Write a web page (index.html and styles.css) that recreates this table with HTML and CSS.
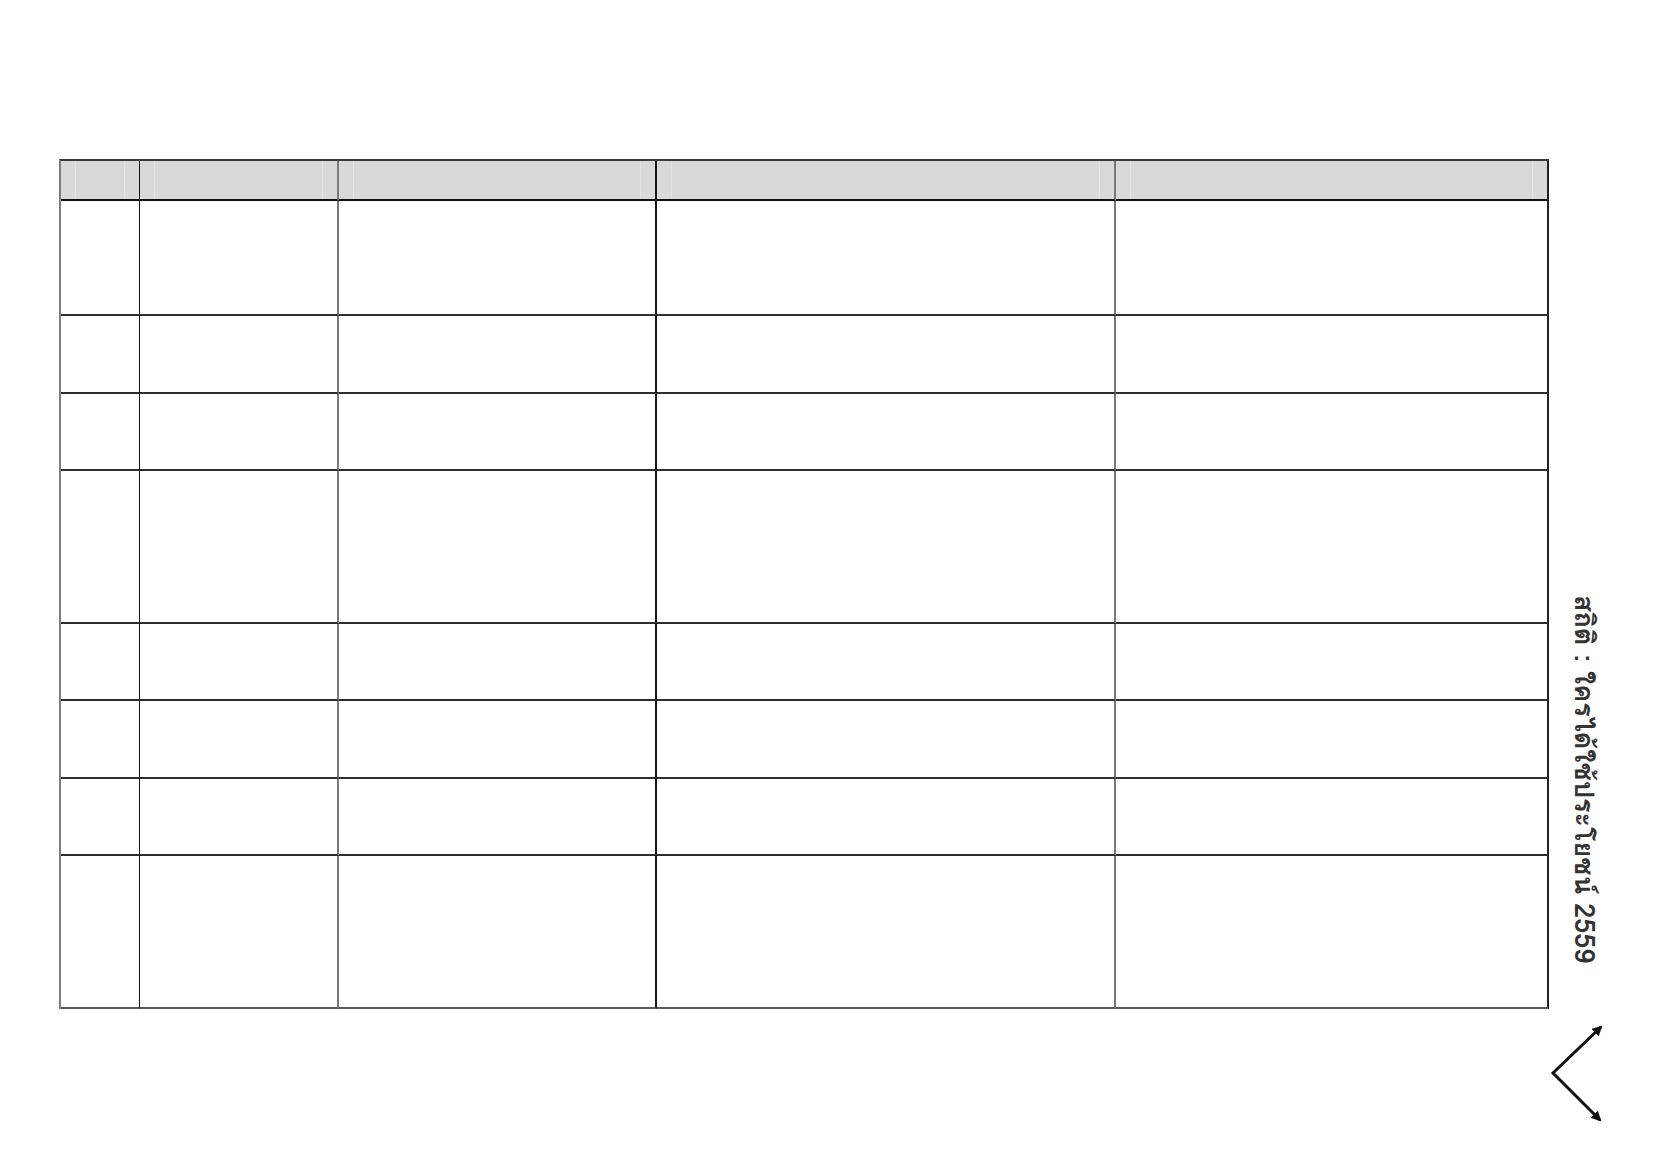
FILE: index.html
```html
<!DOCTYPE html>
<html lang="th">
<head>
<meta charset="utf-8">
<title>สถิติ : ใครได้ใช้ประโยชน์ 2559</title>
<link rel="stylesheet" href="styles.css">
</head>
<body>
<div class="page">
  <div class="grid">
    <div class="cell c1 head"><div class="pad"></div></div>
    <div class="cell c2 head"><div class="pad"></div></div>
    <div class="cell c3 head"><div class="pad"></div></div>
    <div class="cell c4 head"><div class="pad"></div></div>
    <div class="cell c5 head"><div class="pad"></div></div>

    <div class="cell c1"></div><div class="cell c2"></div><div class="cell c3"></div><div class="cell c4"></div><div class="cell c5"></div>
    <div class="cell c1"></div><div class="cell c2"></div><div class="cell c3"></div><div class="cell c4"></div><div class="cell c5"></div>
    <div class="cell c1"></div><div class="cell c2"></div><div class="cell c3"></div><div class="cell c4"></div><div class="cell c5"></div>
    <div class="cell c1"></div><div class="cell c2"></div><div class="cell c3"></div><div class="cell c4"></div><div class="cell c5"></div>
    <div class="cell c1"></div><div class="cell c2"></div><div class="cell c3"></div><div class="cell c4"></div><div class="cell c5"></div>
    <div class="cell c1"></div><div class="cell c2"></div><div class="cell c3"></div><div class="cell c4"></div><div class="cell c5"></div>
    <div class="cell c1"></div><div class="cell c2"></div><div class="cell c3"></div><div class="cell c4"></div><div class="cell c5"></div>
    <div class="cell c1 last"></div><div class="cell c2 last"></div><div class="cell c3 last"></div><div class="cell c4 last"></div><div class="cell c5 last"></div>
  </div>
  <div class="side">
    <div class="side-title">สถิติ : ใครได้ใช้ประโยชน์ 2559</div>
    <svg class="arrow" width="60" height="110" viewBox="0 0 60 110" aria-hidden="true">
      <defs>
        <marker id="ah" viewBox="0 0 10 10" refX="8" refY="5" markerWidth="3.4" markerHeight="3.4" orient="auto-start-reverse" markerUnits="strokeWidth">
          <path d="M0 0 L10 5 L0 10 Z" fill="#111"/>
        </marker>
      </defs>
      <polyline points="52,7 4,53 51,100" fill="none" stroke="#111" stroke-width="3" stroke-linejoin="miter" marker-start="url(#ah)" marker-end="url(#ah)"/>
    </svg>
  </div>
</div>
</body>
</html>
```

FILE: styles.css
```css
* { box-sizing: border-box; }

html, body {
  margin: 0;
  padding: 0;
  background: #ffffff;
}

body {
  font-family: "Norasi", "Garuda", "Loma", "Noto Sans Thai", "Tlwg Typo", "DejaVu Sans", sans-serif;
}

.page {
  display: flex;
  align-items: flex-start;
  padding: 159px 0 0 59px;
}

.grid {
  display: grid;
  width: 1490px;
  grid-template-columns: 79px 199px 318px 459px 433px;
  grid-template-rows: 40px 115px 78px 77px 153px 77px 78px 77px 153px;
  border-left: 2px solid #7e7e7e;
  border-top: 2px solid #3a3a3a;
}

.cell {
  border-bottom: 2px solid #2e2e2e;
  background: #ffffff;
}

.cell.last {
  border-bottom-color: #5a5a5a;
}

.c1 { border-right: 1px solid #111111; }
.c2 { border-right: 2px solid #7a7a7a; }
.c3 { border-right: 2px solid #151515; }
.c4 { border-right: 2px solid #777777; }
.c5 { border-right: 2px solid #222222; }

.head {
  background: #d9d9d9;
  border-bottom: 2px solid #0e0e0e;
  padding: 0 14px;
}

.head .pad {
  height: 100%;
  border-left: 1px solid #e4e4e4;
  border-right: 1px solid #e4e4e4;
}

.side {
  display: flex;
  flex-direction: column;
  align-items: flex-start;
}

.side-title {
  writing-mode: vertical-rl;
  margin: 436px 0 0 20px;
  height: 368px;
  font-size: 27px;
  line-height: 30px;
  letter-spacing: 0;
  font-weight: 600;
  color: #333333;
  white-space: nowrap;
}

.arrow {
  display: block;
  margin: 57px 0 0 0;
}
```
